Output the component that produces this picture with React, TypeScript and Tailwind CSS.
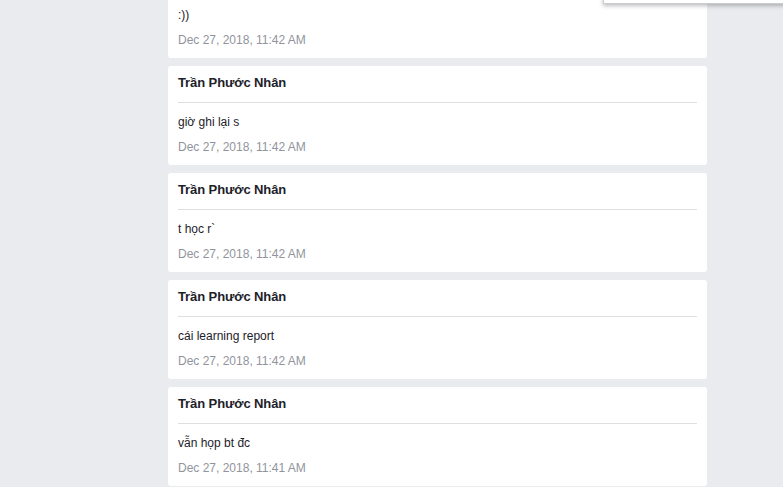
import React from 'react';

interface Message {
  author: string;
  text: string;
  time: string;
}

const messages: Message[] = [
  { author: 'Trần Phước Nhân', text: ':))', time: 'Dec 27, 2018, 11:42 AM' },
  { author: 'Trần Phước Nhân', text: 'giờ ghi lại s', time: 'Dec 27, 2018, 11:42 AM' },
  { author: 'Trần Phước Nhân', text: 't học r`', time: 'Dec 27, 2018, 11:42 AM' },
  { author: 'Trần Phước Nhân', text: 'cái learning report', time: 'Dec 27, 2018, 11:42 AM' },
  { author: 'Trần Phước Nhân', text: 'vẫn họp bt đc', time: 'Dec 27, 2018, 11:41 AM' },
];

const MessageCard: React.FC<{ message: Message }> = ({ message }) => (
  <div className="bg-white rounded-[3px] h-[99px] px-[10px] flex flex-col">
    <div className="pt-[9px] h-[37px] border-b border-[#dddfe2]">
      <p className="text-[13px] leading-[16px] font-bold tracking-[-0.1px] text-[#1d2129]">{message.author}</p>
    </div>
    <p className="mt-[11px] text-[12px] leading-[16px] text-[#1d2129]">{message.text}</p>
    <p className="mt-[9px] text-[12px] leading-[16px] text-[#90949c]">{message.time}</p>
  </div>
);

export default function App() {
  return (
    <div
      className="relative h-[487px] w-full overflow-hidden bg-[#e9ebee]"
      style={{ fontFamily: '"Liberation Sans", Arial, sans-serif' }}
    >
      <div className="ml-[168px] w-[539px] -mt-[41px] flex flex-col gap-[8px]">
        {messages.map((m, i) => (
          <MessageCard key={i} message={m} />
        ))}
      </div>
      <div className="absolute left-[603px] top-[-20px] w-[190px] h-[24px] bg-white border border-[#c9ccd1] shadow-[0_2px_4px_rgba(0,0,0,0.25)]" />
    </div>
  );
}
